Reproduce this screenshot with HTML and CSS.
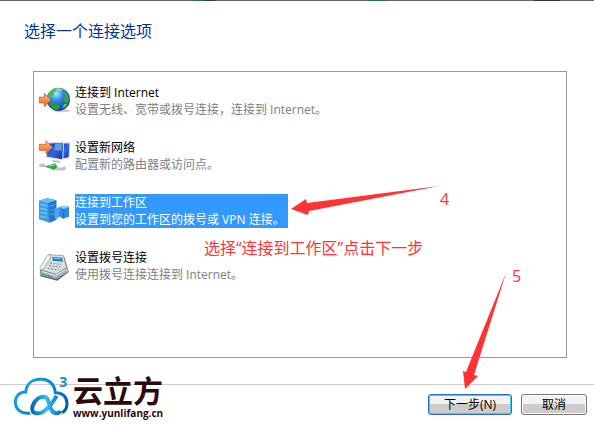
FILE: index.html
```html
<!DOCTYPE html>
<html lang="zh-CN">
<head>
<meta charset="utf-8">
<title>选择一个连接选项</title>
<link rel="stylesheet" href="styles.css">
</head>
<body>
<main class="wizard">
  <h1 class="title">选择一个连接选项</h1>
  <div class="options">
    <button type="button" class="option">
      <svg class="icon" viewBox="0 0 96 102" aria-hidden="true">
        <defs>
          <radialGradient id="sea" cx=".4" cy=".25" r=".8"><stop offset="0" stop-color="#a5ecff"/><stop offset=".4" stop-color="#2f86e0"/><stop offset="1" stop-color="#103494"/></radialGradient>
          <linearGradient id="arrow" x1="0" y1="0" x2="0" y2="1"><stop offset="0" stop-color="#ffb878"/><stop offset="1" stop-color="#f06a20"/></linearGradient>
        </defs>
        <ellipse cx="70" cy="80" rx="26" ry="5" fill="#ccc"/>
        <circle cx="61" cy="46" r="35" fill="url(#sea)"/>
        <path d="M34 26q8-12 20-13l2 6-9 7 1 7-8 5-9 10q-3-9 3-22z" fill="#54b845"/>
        <path d="M78 22l8 6 8 16-5 14-9-3-3-10 6-9-6-6z" fill="#3fa440"/>
        <path d="M36 56l16 2 14 8-6 12-15-3-9-12z" fill="#2c9a35"/>
        <path d="M78 60l10-1-6 10-9 4z" fill="#64c850"/>
        <path d="M52 15q14-5 24 3l-14 5z" fill="#8edc80"/>
        <path d="M4 39h15V28l20 20-20 20V57H4z" fill="url(#arrow)" stroke="#c94b16" stroke-width="2"/>
      </svg>
      <span class="copy"><span class="name">连接到 Internet</span><span class="desc">设置无线、宽带或拨号连接，连接到 Internet。</span></span>
    </button>
    <button type="button" class="option">
      <svg class="icon" viewBox="0 0 96 102" aria-hidden="true">
        <defs><linearGradient id="screen" x1="0" y1="0" x2="1" y2="1"><stop offset="0" stop-color="#0c2daf"/><stop offset=".5" stop-color="#3269de"/><stop offset="1" stop-color="#1422a0"/></linearGradient></defs>
        <path d="M64 12l32 0-3 44-26 5z" fill="url(#screen)" stroke="#d5dfe9" stroke-width="3"/>
        <path d="M33 12l44-2-3 52-50-8z" fill="url(#screen)" stroke="#dbe4ef" stroke-width="3"/>
        <path d="M52 14l20-1-2 22-22-2z" fill="#8cb2f4" opacity=".65"/>
        <path d="M43 62l20 3 9 7-30-3z" fill="#b9cadb"/>
        <path d="M3 76l15-3 5 7 18 1 28 5 12-4 4 8-13 5-16-2-35-8-16-1z" fill="#b9c5cb"/>
        <path d="M22 82l30-9 6 10-10 10z" fill="#22ad35"/>
        <path d="M32 82l20-5" stroke="#8cea85" stroke-width="3"/>
        <path d="M4 16h20V5l20 20-20 20V34H4z" fill="url(#arrow)" stroke="#c94b16" stroke-width="2"/>
      </svg>
      <span class="copy"><span class="name">设置新网络</span><span class="desc">配置新的路由器或访问点。</span></span>
    </button>
    <button type="button" class="option selected">
      <svg class="icon" viewBox="0 0 96 102" aria-hidden="true">
        <path d="M63 39l20-4 10 4v29l-18 6-12-7z" fill="#328be0"/>
        <path d="M63 39l20-4 10 4-16 6z" fill="#86d1f7"/>
        <path d="M77 45v28" stroke="#1d68c2" stroke-width="3"/>
        <path d="M3 20l24-8 28 7v58l-21 9-31-10z" fill="#3c9fe8"/>
        <path d="M3 20l24-8 28 7-24 8z" fill="#65c3f3"/>
        <path d="M31 27l24-8v58l-21 9z" fill="#2577cc"/>
        <path d="M7 31l20 5M7 43l20 5M7 55l20 4M7 67l20 4" stroke="#70ccf6" stroke-width="4"/>
        <path d="M36 37l15-5M36 50l15-4M36 62l15-4" stroke="#4f9ee5" stroke-width="4"/>
        <path d="M50 44l13-4v31l-13 3z" fill="#4ca7ec"/>
      </svg>
      <span class="copy"><span class="name">连接到工作区</span><span class="desc">设置到您的工作区的拨号或 VPN 连接。</span></span>
    </button>
    <button type="button" class="option">
      <svg class="icon" viewBox="0 0 96 102" aria-hidden="true">
        <path d="M5 68l24-46 50 2 13 45-34 26-51-13z" fill="#59666c"/>
        <path d="M33 17l43 3 10 36-32 20-42-12z" fill="#d8dfe0" stroke="#7c8588" stroke-width="2"/>
        <path d="M7 65l45 13 38-20 2 9-37 23-48-12z" fill="#aab4b7"/>
        <path d="M12 67l40 12 34-19" fill="none" stroke="#f4f6f6" stroke-width="3"/>
        <path d="M12 75l30 9" stroke="#2f8f9c" stroke-width="5" stroke-dasharray="6 3"/>
        <path d="M43 24l29 2 3 12-31-3z" fill="#2678bf"/>
        <path d="M47 28l21 2" stroke="#6fd0f5" stroke-width="3"/>
        <path d="M36 42l33 4M33 50l34 4M29 58l33 5" stroke="#8e9aa0" stroke-width="4" stroke-dasharray="6 4"/>
        <path d="M6 59q-1-8 5-11l15-26q4-8 10-4 5 5 0 12L20 54q-3 10-9 9z" fill="#eef2f2" stroke="#8b969a" stroke-width="2"/>
      </svg>
      <span class="copy"><span class="name">设置拨号连接</span><span class="desc">使用拨号连接连接到 Internet。</span></span>
    </button>
  </div>
  <footer class="footer">
    <div class="brand">
      <svg class="cloud" viewBox="36 36 174 120" aria-hidden="true">
        <defs>
          <linearGradient id="blue" gradientUnits="userSpaceOnUse" x1="60" y1="40" x2="190" y2="150"><stop offset="0" stop-color="#1ca6e8"/><stop offset=".55" stop-color="#0785cf"/><stop offset="1" stop-color="#0758a4"/></linearGradient>
          <linearGradient id="cyan" x1="0" y1="0" x2="1" y2="0"><stop offset="0" stop-color="#0869b8"/><stop offset=".5" stop-color="#36bdec"/><stop offset="1" stop-color="#0874c2"/></linearGradient>
        </defs>
        <path d="M92 144C62 148 46 132 46 111c0-17 12-30 31-30C80 54 100 42 124 43c25 1 39 17 42 40 20-1 35 12 35 32 0 22-14 33-35 32" fill="none" stroke="url(#blue)" stroke-width="9"/>
        <path d="M170 92c-14 24-35 53-57 53-15 0-19-10-15-22 6-17 19-28 34-28 20 0 12 50 37 50q8 0 13-6" fill="none" stroke="#fff" stroke-width="19"/>
        <path d="M170 92c-14 24-35 53-57 53-15 0-19-10-15-22 6-17 19-28 34-28 20 0 12 50 37 50q8 0 13-6" fill="none" stroke="url(#cyan)" stroke-width="12"/>
        <text class="cube" x="178" y="66">3</text>
      </svg>
      <div class="wordmark"><span class="brand-name">云立方</span><span class="site">www.yunlifang.cn</span></div>
    </div>
    <div class="actions">
      <button type="button" class="action primary">下一步(N)</button>
      <button type="button" class="action">取消</button>
    </div>
  </footer>
  <svg class="arrows" width="594" height="425" viewBox="0 0 594 425" aria-hidden="true">
    <path d="M439 186L307 203l-1-4-15 10 17 6 1-4z"/>
    <path d="M506 273L466 372l-3-1 2 18 13-13-4-1z"/>
  </svg>
  <span class="note step-four">4</span>
  <span class="note hint">选择“连接到工作区”点击下一步</span>
  <span class="note step-five">5</span>
</main>
</body>
</html>
```
FILE: styles.css
```css
* { box-sizing: border-box; }

body {
  margin: 0;
  background: #fff;
  font-family: "Open Sans", "Noto Sans CJK SC", sans-serif;
  font-size: 12px;
  color: #000;
}

button {
  font: inherit;
  color: inherit;
}

.wizard {
  position: relative;
  display: flex;
  flex-direction: column;
  min-height: 100vh;
  padding-top: 1px;
  background: linear-gradient(90deg, #666 193px, #266 193px 204px, #336 204px 215px, #666 215px 368px, #266 368px 388px, #666 388px 534px, #334 534px 560px, #666 560px) top / 100% 1px no-repeat;
  overflow: hidden;
}

.title {
  margin: 18px 24px 28px;
  font-size: 16px;
  font-weight: 400;
  line-height: 24px;
  color: #039;
}

.options {
  flex: 1;
  display: flex;
  flex-direction: column;
  align-items: flex-start;
  gap: 21px;
  margin: 0 27px 0 33px;
  padding: 12px 4px;
  border: 1px solid #999;
}

.option {
  display: flex;
  gap: 5px;
  padding: 0;
  border: 0;
  background: none;
  text-align: left;
  line-height: 17px;
}

.icon {
  width: 32px;
  height: 34px;
}

.copy {
  display: flex;
  flex-direction: column;
  white-space: nowrap;
}

.desc { color: #808080; }

.selected .copy {
  position: relative;
  padding-right: 3px;
  background: #39f;
  color: #fff;
}

.selected .copy::after {
  content: "";
  position: absolute;
  inset: 0;
  border: 1px dotted #c67717;
}

.selected .desc { color: #fff; }

.footer {
  display: flex;
  justify-content: space-between;
  align-items: flex-start;
  height: 41px;
  margin-top: 26px;
  padding: 0 7px 0 12px;
  border-top: 1px solid #ccc;
}

.brand {
  display: flex;
  gap: 3px;
  margin-top: -8px;
  color: #2c0a0a;
}

.cloud {
  width: 58px;
  height: 40px;
  overflow: visible;
}

.cube {
  font-size: 42px;
  font-weight: 700;
  fill: #0c8fd6;
}

.wordmark {
  display: flex;
  flex-direction: column;
}

.brand-name {
  font-size: 30px;
  font-weight: 700;
  line-height: 28px;
}

.site {
  font-size: 10px;
  font-weight: 700;
  line-height: 16px;
}

.actions {
  display: flex;
  gap: 9px;
  margin-top: 9px;
}

.action {
  width: 66px;
  height: 21px;
  padding: 0;
  border: 1px solid #777;
  border-radius: 3px;
  background: linear-gradient(#f2f2f2 50%, #ccc 50%);
  box-shadow: inset 0 0 0 1px #fff;
  line-height: 18px;
}

.primary {
  width: 84px;
  border-color: #2b6cc4;
  box-shadow: inset 0 0 0 1px #46c8f5;
}

.arrows {
  position: absolute;
  top: 0;
  left: 0;
  fill: #f33;
  pointer-events: none;
}

.note {
  position: absolute;
  font-size: 16px;
  line-height: 20px;
  color: #f33;
  white-space: nowrap;
}

.step-four { left: 440px; top: 189px; }
.hint { left: 204px; top: 238px; }
.step-five { left: 512px; top: 266px; }
```
